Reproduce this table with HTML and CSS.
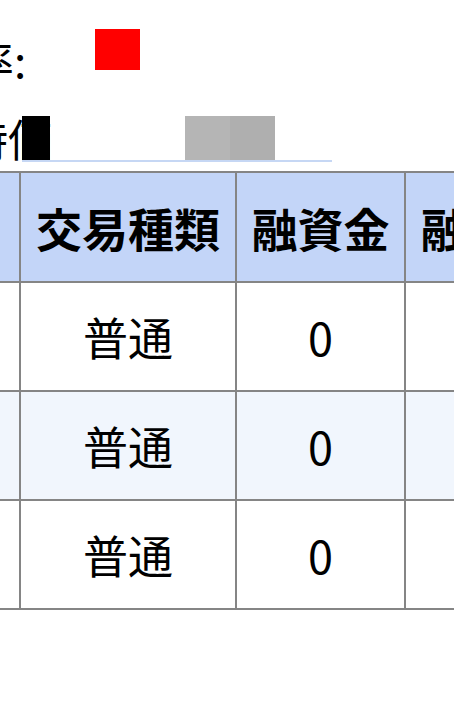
FILE: index.html
```html
<!DOCTYPE html>
<html lang="ja">
<head>
<meta charset="utf-8">
<link rel="stylesheet" href="styles.css">
</head>
<body>
<div class="top">
  <div class="line1">
    <span class="label1">比率:</span>
    <span class="flag"></span>
  </div>
  <div class="line2">
    <span class="label2">時価</span>
    <div class="field">
      <span class="mask-black"></span>
      <span class="mask-gray a"></span>
      <span class="mask-gray b"></span>
    </div>
  </div>
</div>
<table class="grid">
  <colgroup>
    <col class="c1"><col class="c2"><col class="c3"><col class="c4">
  </colgroup>
  <thead>
    <tr><th>株数</th><th>交易種類</th><th>融資金</th><th>融資額</th></tr>
  </thead>
  <tbody>
    <tr><td></td><td>普通</td><td>0</td><td>0</td></tr>
    <tr class="alt"><td></td><td>普通</td><td>0</td><td>0</td></tr>
    <tr><td></td><td>普通</td><td>0</td><td>0</td></tr>
  </tbody>
</table>
</body>
</html>
```
FILE: styles.css
```css
html, body {
  margin: 0;
  padding: 0;
  background: #ffffff;
  overflow: hidden;
}
body {
  font-family: "Noto Sans CJK JP", "Noto Sans", sans-serif;
  font-size: 44px;
  color: #000;
}
.top {
  padding-top: 27px;
}
.line1 {
  display: flex;
  align-items: flex-start;
  height: 64px;
}
.label1 {
  display: block;
  margin-left: -74px;
  flex: 0 0 169px;
  line-height: 64px;
  white-space: nowrap;
}
.flag {
  display: block;
  width: 45px;
  height: 41px;
  margin-top: 2px;
  background: #ff0000;
}
.line2 {
  display: flex;
  align-items: flex-start;
  height: 64px;
  margin-top: 15px;
}
.label2 {
  display: block;
  margin-left: -36px;
  flex: 0 0 86px;
  line-height: 64px;
  white-space: nowrap;
}
.field {
  display: flex;
  align-items: flex-start;
  width: 310px;
  height: 44px;
  margin-top: 10px;
  margin-left: -30px;
  border-bottom: 2px solid #c6d7f4;
}
.mask-black {
  display: block;
  width: 28px;
  height: 44px;
  background: #000;
}
.mask-gray {
  display: block;
  width: 45px;
  height: 44px;
}
.mask-gray.a {
  margin-left: 135px;
  background: #b5b5b5;
}
.mask-gray.b {
  background: #afafaf;
}
.grid {
  border-collapse: collapse;
  table-layout: fixed;
  margin-top: 1px;
  margin-left: -141px;
  width: 714px;
}
.c1 { width: 160px; }
.c2 { width: 216px; }
.c3 { width: 169px; }
.c4 { width: 169px; }
.grid th,
.grid td {
  border: 2px solid #858585;
  text-align: center;
  vertical-align: middle;
  padding: 0;
  white-space: nowrap;
}
.grid th {
  background: #c3d5f8;
  font-weight: bold;
  font-size: 46px;
  height: 108px;
}
.grid td {
  height: 107px;
  font-size: 45px;
  font-weight: normal;
}
.grid tr.alt td {
  background: #f1f6fd;
}
```
